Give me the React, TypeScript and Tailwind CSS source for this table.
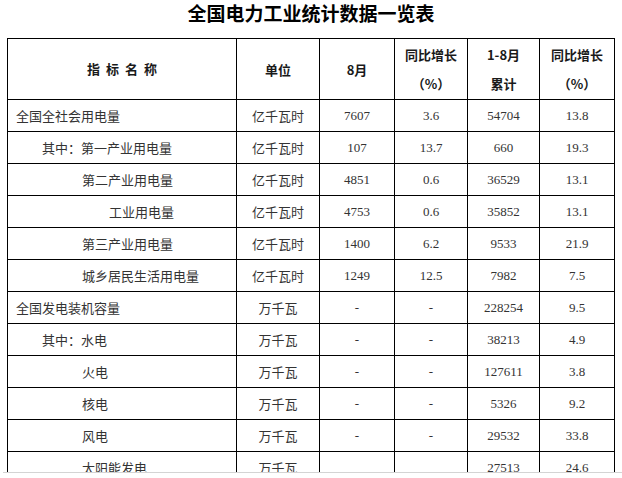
type Row = {
  name: string;
  indent: number;
  unit: string;
  month: string;
  yoy: string;
  total: string;
  totalYoy: string;
};

const rows: Row[] = [
  { name: "全国全社会用电量", indent: 0, unit: "亿千瓦时", month: "7607", yoy: "3.6", total: "54704", totalYoy: "13.8" },
  { name: "其中：第一产业用电量", indent: 1, unit: "亿千瓦时", month: "107", yoy: "13.7", total: "660", totalYoy: "19.3" },
  { name: "第二产业用电量", indent: 2, unit: "亿千瓦时", month: "4851", yoy: "0.6", total: "36529", totalYoy: "13.1" },
  { name: "工业用电量", indent: 3, unit: "亿千瓦时", month: "4753", yoy: "0.6", total: "35852", totalYoy: "13.1" },
  { name: "第三产业用电量", indent: 2, unit: "亿千瓦时", month: "1400", yoy: "6.2", total: "9533", totalYoy: "21.9" },
  { name: "城乡居民生活用电量", indent: 2, unit: "亿千瓦时", month: "1249", yoy: "12.5", total: "7982", totalYoy: "7.5" },
  { name: "全国发电装机容量", indent: 0, unit: "万千瓦", month: "-", yoy: "-", total: "228254", totalYoy: "9.5" },
  { name: "其中：水电", indent: 1, unit: "万千瓦", month: "-", yoy: "-", total: "38213", totalYoy: "4.9" },
  { name: "火电", indent: 2, unit: "万千瓦", month: "-", yoy: "-", total: "127611", totalYoy: "3.8" },
  { name: "核电", indent: 2, unit: "万千瓦", month: "-", yoy: "-", total: "5326", totalYoy: "9.2" },
  { name: "风电", indent: 2, unit: "万千瓦", month: "-", yoy: "-", total: "29532", totalYoy: "33.8" },
  { name: "太阳能发电", indent: 2, unit: "万千瓦", month: "", yoy: "", total: "27513", totalYoy: "24.6" },
];

const indentClass = ["pl-2", "pl-[34px]", "pl-[74px]", "pl-[101px]"];

function HeadCell({ lines }: { lines: string[] }) {
  return (
    <div className="bg-white h-[60px] flex flex-col items-center justify-center font-bold text-[13px] leading-[29px] text-[#1a1a1a]">
      {lines.map((l) => (
        <div key={l}>{l}</div>
      ))}
    </div>
  );
}

function NumCell({ value }: { value: string }) {
  return (
    <div className="bg-white h-[31px] flex items-center justify-center text-[13px] text-[#333] font-['Liberation_Serif','Noto_Sans_CJK_SC',serif]">
      {value}
    </div>
  );
}

export default function App() {
  return (
    <div className="w-[622px] h-[478px] bg-white overflow-hidden font-['Noto_Sans_CJK_SC','Liberation_Sans',sans-serif]">
      <div className="h-[38px] text-center text-[19px] font-bold leading-[26px] text-black">
        全国电力工业统计数据一览表
      </div>

      <div className="h-[434px] overflow-hidden pl-[7px]">
        <div className="grid grid-cols-[228px_82px_74px_72px_71px_74px] gap-px p-px bg-black w-[608px]">
          {/* name header keeps its wide letter spacing */}
          <div className="bg-white h-[60px] flex items-center justify-center gap-[6px] font-bold text-[13px] text-[#1a1a1a]">
            <span>指</span>
            <span>标</span>
            <span>名</span>
            <span>称</span>
          </div>
          <HeadCell lines={["单位"]} />
          <HeadCell lines={["8月"]} />
          <HeadCell lines={["同比增长", "（%）"]} />
          <HeadCell lines={["1-8月", "累计"]} />
          <HeadCell lines={["同比增长", "（%）"]} />

          {rows.map((r) => (
            <div key={r.name} className="contents">
              <div className={`bg-white h-[31px] flex items-center text-[13px] text-[#333] ${indentClass[r.indent]}`}>
                {r.name}
              </div>
              <div className="bg-white h-[31px] flex items-center justify-center text-[13px] text-[#333]">
                {r.unit}
              </div>
              <NumCell value={r.month} />
              <NumCell value={r.yoy} />
              <NumCell value={r.total} />
              <NumCell value={r.totalYoy} />
            </div>
          ))}
        </div>
      </div>

      <div className="h-px ml-[3px] bg-[#d4d4d4]" />
    </div>
  );
}
